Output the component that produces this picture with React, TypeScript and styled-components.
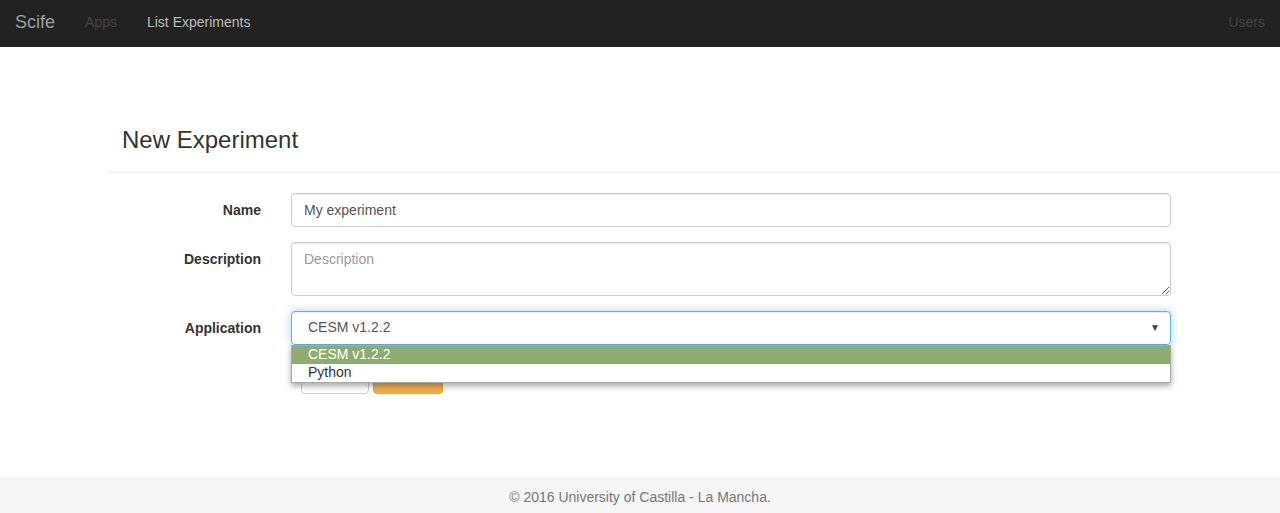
import React from "react";
import styled, { createGlobalStyle } from "styled-components";

const Global = createGlobalStyle`
  html, body { margin: 0; padding: 0; background: #fff; }
  body {
    font-family: "Liberation Sans", Arial, sans-serif;
    font-size: 14px;
    line-height: 1.42857;
    color: #333;
  }
  * { box-sizing: border-box; }
`;

const Navbar = styled.nav`
  height: 47px;
  background: #222;
  display: flex;
  align-items: flex-start;
  padding-top: 12px;
`;

const Brand = styled.a`
  padding: 0 15px;
  font-size: 18px;
  line-height: 20px;
  color: #9d9d9d;
  text-decoration: none;
`;

const NavLink = styled.a<{ $tone: "dim" | "light" }>`
  padding: 0 15px;
  font-size: 14px;
  line-height: 20px;
  color: ${(p) => (p.$tone === "dim" ? "#444" : "#bcbcbc")};
  text-decoration: none;
`;

const Spacer = styled.div`
  flex: 1;
`;

const Main = styled.main`
  padding-left: 107px;
  padding-top: 80px;
`;

const PageHeader = styled.div`
  border-bottom: 1px solid #eee;
  padding: 0 15px 19px;
`;

const Title = styled.h3`
  margin: 0;
  font-size: 24px;
  line-height: 26px;
  font-weight: 500;
  color: #333;
`;

const Form = styled.form`
  padding-top: 20px;
  margin-right: 94px;
  display: flex;
  flex-direction: column;
  gap: 15px;
`;

const Row = styled.div`
  display: grid;
  grid-template-columns: 169px 1fr;
  position: relative;
`;

const Label = styled.label`
  padding: 7px 15px 0 0;
  text-align: right;
  font-weight: 700;
  line-height: 20px;
`;

const Field = styled.div`
  padding: 0 15px;
  position: relative;
`;

const Input = styled.input`
  display: block;
  width: 100%;
  height: 34px;
  padding: 6px 12px;
  font: inherit;
  font-size: 14px;
  color: #555;
  border: 1px solid #ccc;
  border-radius: 4px;
  box-shadow: inset 0 1px 1px rgba(0, 0, 0, 0.075);
  outline: none;
`;

const TextArea = styled.textarea`
  display: block;
  width: 100%;
  height: 54px;
  padding: 7px 12px 5px;
  font: inherit;
  font-size: 14px;
  color: #555;
  border: 1px solid #ccc;
  border-radius: 4px;
  box-shadow: inset 0 1px 1px rgba(0, 0, 0, 0.075);
  resize: vertical;
  outline: none;
  &::placeholder { color: #999; }
`;

const SelectBox = styled.div`
  height: 34px;
  padding: 0 10px 0 16px;
  display: flex;
  align-items: center;
  justify-content: space-between;
  color: #555;
  border: 1px solid #66afe9;
  border-radius: 4px;
  box-shadow: inset 0 1px 1px rgba(0, 0, 0, 0.075), 0 0 8px rgba(102, 175, 233, 0.6);
`;

const Arrow = styled.span`
  font-size: 10px;
  color: #444;
`;

const DropList = styled.ul`
  position: absolute;
  top: 34px;
  left: 15px;
  right: 15px;
  margin: 0;
  padding: 0;
  list-style: none;
  background: #fff;
  border: 1px solid #a9a9a9;
  box-shadow: 0 3px 6px rgba(0, 0, 0, 0.35);
  z-index: 10;
`;

const Option = styled.li<{ $selected?: boolean }>`
  height: 18px;
  line-height: 16px;
  padding-left: 16px;
  font-size: 14px;
  color: ${(p) => (p.$selected ? "#fff" : "#333")};
  background: ${(p) => (p.$selected ? "#8fac70" : "#fff")};
`;

const Buttons = styled.div`
  grid-column: 2;
  padding: 0 25px;
  display: flex;
  gap: 4px;
`;

const Button = styled.button<{ $variant: "default" | "warning"; $w: number }>`
  width: ${(p) => p.$w}px;
  height: 34px;
  padding: 6px 0;
  font: inherit;
  font-size: 14px;
  border-radius: 4px;
  border: 1px solid ${(p) => (p.$variant === "warning" ? "#eea236" : "#ccc")};
  background: ${(p) => (p.$variant === "warning" ? "#f0ad4e" : "#fff")};
  color: ${(p) => (p.$variant === "warning" ? "#fff" : "#333")};
`;

const Footer = styled.footer`
  margin-top: 83px;
  background: #f5f5f5;
  padding: 10px 0 20px;
  text-align: center;
  color: #777;
  line-height: 20px;
`;

export default function App() {
  return (
    <>
      <Global />
      <Navbar>
        <Brand href="#">Scife</Brand>
        <NavLink $tone="dim" href="#">Apps</NavLink>
        <NavLink $tone="light" href="#">List Experiments</NavLink>
        <Spacer />
        <NavLink $tone="dim" href="#">Users</NavLink>
      </Navbar>
      <Main>
        <PageHeader>
          <Title>New Experiment</Title>
        </PageHeader>
        <Form>
          <Row>
            <Label>Name</Label>
            <Field>
              <Input defaultValue="My experiment" />
            </Field>
          </Row>
          <Row>
            <Label>Description</Label>
            <Field>
              <TextArea placeholder="Description" />
            </Field>
          </Row>
          <Row>
            <Label>Application</Label>
            <Field>
              <SelectBox>
                <span>CESM v1.2.2</span>
                <Arrow>▼</Arrow>
              </SelectBox>
              <DropList>
                <Option $selected>CESM v1.2.2</Option>
                <Option>Python</Option>
              </DropList>
            </Field>
          </Row>
          <Row>
            <Buttons>
              <Button type="button" $variant="default" $w={68}>Cancel</Button>
              <Button type="button" $variant="warning" $w={70}>Submit</Button>
            </Buttons>
          </Row>
        </Form>
      </Main>
      <Footer>© 2016 University of Castilla - La Mancha.</Footer>
    </>
  );
}
